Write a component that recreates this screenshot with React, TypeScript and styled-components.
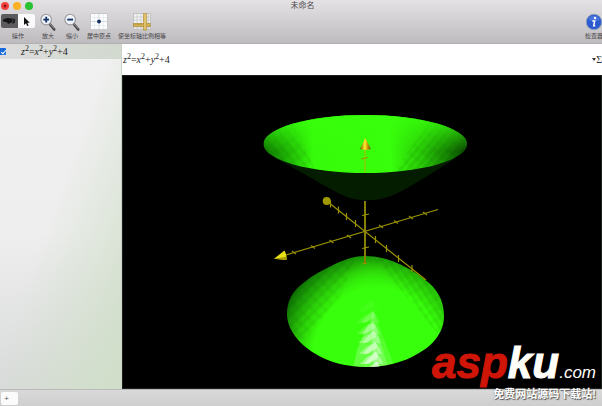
import React from "react";
import styled, { createGlobalStyle } from "styled-components";

const GlobalStyle = createGlobalStyle`
  * { box-sizing: border-box; }
  body { margin: 0; overflow: hidden; }
  button, input { font: inherit; color: inherit; }
`;

const Window = styled.div`
  position: relative;
  display: grid;
  grid-template-rows: auto 1fr auto;
  height: 100vh;
  overflow: hidden;
  background: #000;
  color: #333;
  font-family: "Liberation Sans", "Noto Sans CJK SC", sans-serif;
`;

const Header = styled.header`
  height: 44px;
  background: linear-gradient(#e3e1e3, #d3d1d4 45%, #bdbbbe);
  border-bottom: 1px solid #b2b0b5;
`;

const TitleBar = styled.div`
  display: grid;
  grid-template-columns: 1fr auto 1fr;
  align-items: center;
  height: 11px;
`;

const Lights = styled.div`
  display: flex;
  gap: 4px;
  padding-left: 1px;
`;

const Light = styled.button<{ $color: string; $edited?: boolean }>`
  width: 8px;
  height: 8px;
  padding: 0;
  border: 0;
  border-radius: 50%;
  background: ${(p) =>
    p.$edited ? `radial-gradient(circle, #8b1512 0 1px, ${p.$color} 2px)` : p.$color};
`;

const Title = styled.h1`
  margin: 0;
  padding: 0 0 0 3px;
  color: #4b494c;
  font-size: 8px;
  line-height: 10px;
  font-weight: 400;
`;

const Toolbar = styled.div`
  display: flex;
  align-items: flex-start;
  padding-top: 2px;
`;

const ToolGroup = styled.div`
  width: 36px;
  text-align: center;
`;

const Segments = styled.div`
  display: flex;
  height: 18px;
  padding: 1px;
`;

const Segment = styled.button<{ $active?: boolean }>`
  display: grid;
  place-items: center;
  width: 17px;
  height: 14px;
  padding: 0;
  border: 0;
  border-radius: ${(p) => (p.$active ? "2px 0 0 2px" : "0 2px 2px 0")};
  background: ${(p) => (p.$active ? "#5c5c5e" : "#fafafa")};
`;

const Tool = styled.button<{ $width: number; $end?: boolean }>`
  flex: none;
  width: ${(p) => p.$width}px;
  margin-left: ${(p) => (p.$end ? "auto" : "0")};
  margin-right: ${(p) => (p.$end ? "-3px" : "0")};
  padding: 0;
  border: 0;
  background: none;
  text-align: center;
  svg { display: block; margin: 0 auto; }
`;

const Caption = styled.span`
  display: block;
  margin-top: 1px;
  color: #474548;
  font-size: 6px;
  line-height: 9px;
  white-space: nowrap;
`;

const Body = styled.div`
  display: grid;
  grid-template-columns: 122px 1fr;
  min-height: 0;
`;

const Sidebar = styled.aside`
  background: linear-gradient(110deg, #dededf00 45%, #d1dfca 95%),
    linear-gradient(#f1f1f1, #eeeeee 55%, #d9dadb);
  border-right: 1px solid #cbd2c9;
`;

const Entry = styled.label`
  display: flex;
  align-items: center;
  gap: 15px;
  height: 15px;
  background: linear-gradient(90deg, #dcdcdc, #d2d9cf);
`;

const Check = styled.input`
  appearance: none;
  width: 6px;
  height: 7px;
  margin: 0;
  border-radius: 0 1px 1px 0;
  background: #1769dc;
  display: grid;
  place-items: center;
  &:checked::after {
    content: "";
    width: 2px;
    height: 4px;
    border: solid #fff;
    border-width: 0 1px 1px 0;
    transform: rotate(40deg);
  }
`;

const Formula = styled.span`
  color: #1d1d1d;
  font-family: "Liberation Serif", serif;
  font-size: 10px;
  line-height: 14px;
  white-space: nowrap;
  sup {
    font-size: 8px;
    line-height: 0;
    vertical-align: 4px;
  }
`;

const Main = styled.main`
  display: grid;
  grid-template-rows: auto 1fr;
  min-width: 0;
  min-height: 0;
`;

const FormulaBar = styled.div`
  display: flex;
  align-items: center;
  justify-content: space-between;
  height: 31px;
  padding-left: 1px;
  overflow: hidden;
  background: #fff;
`;

const SigmaButton = styled.button`
  display: flex;
  align-items: center;
  padding: 0;
  border: 0;
  background: none;
  font-family: "Liberation Serif", serif;
  font-size: 10px;
  line-height: 14px;
`;

const Plot = styled.section`
  min-height: 0;
  background: #000;
  border: 1px solid #1d211d;
  svg { display: block; width: 100%; height: 100%; }
`;

const Footer = styled.footer`
  height: 17px;
  padding: 2px 1px 1px;
  border-top: 1px solid #b9b9b9;
  background: linear-gradient(#d9d9d9, #cecece);
`;

const AddButton = styled.button`
  display: block;
  width: 17px;
  height: 13px;
  padding: 0 6px 0 0;
  border: 0;
  border-radius: 2px;
  background: #fbfbfb;
  color: #555;
  font-size: 8px;
  line-height: 13px;
`;

const Watermark = styled.div`
  position: absolute;
  right: 6px;
  bottom: 5px;
  text-align: right;
  pointer-events: none;
`;

const Brand = styled.div`
  color: #fffef9;
  font-size: 44px;
  line-height: 40px;
  font-style: italic;
  font-weight: 700;
  white-space: nowrap;
  b { color: #cf1508; -webkit-text-stroke: 1px #cf1508; }
  span { -webkit-text-stroke: 1px #fffef9; }
  small { font-size: 17px; font-weight: 400; }
`;

const Slogan = styled.div`
  position: relative;
  margin-top: -6px;
  color: #fff;
  font-size: 11px;
  line-height: 14px;
  font-weight: 700;
  text-shadow: 1px 1px 1px #555, 0 0 1px #777;
`;

const Equation = () => (
  <Formula>
    <i>z</i><sup>2</sup>=<i>x</i><sup>2</sup>+<i>y</i><sup>2</sup>+4
  </Formula>
);

const Magnifier = ({ plus }: { plus?: boolean }) => (
  <svg width="18" height="18" viewBox="0 0 18 18">
    <path d="M10.7 11 15.2 16.4" stroke="#444" strokeWidth="2.6" strokeLinecap="round" />
    <path d="m10.5 10.4 4.8 5.3" stroke="#aaa" strokeWidth=".8" />
    <circle cx="7.2" cy="6.6" r="5.3" fill="#eef2f8" stroke="#98989b" strokeWidth="1.1" />
    <path d={plus ? "M4.3 6.6h5.8M7.2 3.7v5.8" : "M4.3 6.6h5.8"} stroke="#16366b" strokeWidth="1.9" />
  </svg>
);

const OriginIcon = () => (
  <svg width="18" height="18" viewBox="0 0 18 18">
    <rect x=".5" y=".5" width="17" height="16" rx=".5" fill="#fbfcfd" stroke="#c8c8ca" />
    <path d="M4.5 1v15M13.5 1v15M1 4.5h16M1 12.5h16" stroke="#e5e9ed" strokeWidth=".6" />
    <path d="M9 1v15M1 8.5h16" stroke="#bcc5cf" strokeWidth=".6" />
    <circle cx="9" cy="8.5" r="1.9" fill="#132f5f" />
  </svg>
);

const RulerIcon = () => (
  <svg width="18" height="18" viewBox="0 0 18 18">
    <rect x=".5" y=".5" width="17" height="16" fill="#efeff0" stroke="#c3c3c3" />
    <path d="M4 1v15M8 1v15M15.5 1v15M1 4h16M1 7h16M1 15h16" stroke="#bfc3c7" strokeWidth=".6" />
    <path d="M.3 10.5h17v3H.3z" fill="#d9b653" stroke="#9c7b25" strokeWidth=".6" />
    <path d="M10.5.3h3.2v16.8h-3.2z" fill="#e1c169" stroke="#a58632" strokeWidth=".6" />
    <path d="M2 11v1m2-1v1m2-1v1m2-1v1" stroke="#79591a" strokeWidth=".5" />
  </svg>
);

const InfoIcon = () => (
  <svg width="18" height="18" viewBox="0 0 18 18">
    <circle cx="9" cy="9" r="7.7" fill="#2b59ce" stroke="#8d9fbd" />
    <path d="M3.3 7a6 6 0 0 1 11.4 0Q9 9.5 3.3 7" fill="#4875dc" />
    <circle cx="10" cy="5" r="1.2" fill="#fff" />
    <path d="M7.3 7.9h2.4l-1 4.8h1.5" fill="none" stroke="#fff" strokeWidth="1.5" />
  </svg>
);

const lowerSurface =
  "M365 256C377 256 388 259 397 263C408 268 416 272 424 279C437 288 444 300 444 316C444 333 432 346 419 353C403 363 384 367 366 367C347 367 328 362 314 353C299 344 287 329 287 314C287 301 292 292 302 284C314 274 325 269 337 263C347 259 354 256 365 256Z";

const xTicks = [[294, 252.5], [313, 247], [331.5, 241.5], [349, 236.5], [381, 226.5], [396, 222], [411, 217.5], [425, 213.5]];
const yTicks = [[330.5, 204], [338.5, 210], [346.5, 216.5], [355.5, 223.5], [375.5, 239.5], [386.5, 248.5], [398.5, 258.5], [412, 268.5]];

const glints = [
  { x: 372, y: 300, strength: 0.06 },
  { x: 373, y: 311, strength: 0.26 },
  { x: 373, y: 322, strength: 0.4 },
  { x: 374, y: 331, strength: 0.56 },
  { x: 375, y: 342, strength: 0.72 },
  { x: 376, y: 352, strength: 0.86 },
  { x: 377, y: 362, strength: 0.92 },
];

const SurfacePlot = () => (
  <svg viewBox="123 76 478 312" role="img" aria-label="z²=x²+y²+4">
    <defs>
      <linearGradient id="bowl" gradientUnits="userSpaceOnUse" x1="264" y1="150" x2="467" y2="142">
        <stop offset="0" stopColor="#0f7800" />
        <stop offset=".1" stopColor="#1dae04" />
        <stop offset=".24" stopColor="#36fb0a" />
        <stop offset=".62" stopColor="#38ff0b" />
        <stop offset=".77" stopColor="#29cd06" />
        <stop offset=".9" stopColor="#168502" />
        <stop offset="1" stopColor="#084400" />
      </linearGradient>
      <linearGradient id="bowlLight" gradientUnits="userSpaceOnUse" x1="365" y1="113" x2="365" y2="172">
        <stop offset="0" stopColor="#38ff0b" />
        <stop offset=".3" stopColor="#38ff0b" stopOpacity=".55" />
        <stop offset=".65" stopColor="#38ff0b" stopOpacity="0" />
      </linearGradient>
      <radialGradient id="dome" gradientUnits="userSpaceOnUse" cx="378" cy="358" r="113" gradientTransform="translate(378 358) scale(.93 1) translate(-378 -358)">
        <stop offset="0" stopColor="#38ff0b" />
        <stop offset=".62" stopColor="#38ff0b" />
        <stop offset=".78" stopColor="#2acb08" />
        <stop offset=".93" stopColor="#168c05" />
        <stop offset="1" stopColor="#0d6602" />
      </radialGradient>
      <radialGradient id="domeCenter">
        <stop offset=".3" stopColor="#38ff0b" stopOpacity=".9" />
        <stop offset="1" stopColor="#38ff0b" stopOpacity="0" />
      </radialGradient>
      <linearGradient id="gold"><stop stopColor="#685a00" /><stop offset=".45" stopColor="#fff02c" /><stop offset=".65" stopColor="#d9a50b" /><stop offset="1" stopColor="#704000" /></linearGradient>
      <pattern id="facetsLeft" width="9" height="7" patternUnits="userSpaceOnUse" patternTransform="rotate(-45)">
        <path d="M0 0h9v3H0z" fill="#003000" opacity=".06" />
        <path d="M0 0h4v7H0z" fill="#003000" opacity=".04" />
      </pattern>
      <pattern id="facetsBowlLeft" width="9" height="7" patternUnits="userSpaceOnUse" patternTransform="rotate(52)">
        <path d="M0 0h9v3H0z" fill="#003000" opacity=".06" />
        <path d="M0 0h4v7H0z" fill="#003000" opacity=".04" />
      </pattern>
      <pattern id="facetsRight" width="9" height="6" patternUnits="userSpaceOnUse" patternTransform="rotate(-50)">
        <path d="M0 0h9v3H0z" fill="#003000" opacity=".08" />
        <path d="M0 0h4v6H0z" fill="#003000" opacity=".03" />
      </pattern>
      <pattern id="facetsDown" width="9" height="6" patternUnits="userSpaceOnUse" patternTransform="rotate(57)">
        <path d="M0 0h9v3H0z" fill="#003000" opacity=".06" />
        <path d="M0 0h4v6H0z" fill="#003000" opacity=".03" />
      </pattern>
      <clipPath id="domeClip"><path d={lowerSurface} /></clipPath>
      <clipPath id="bowlClip"><ellipse cx="365.3" cy="144" rx="101.8" ry="29" /></clipPath>
    </defs>

    <path d="M276 158C290 166 301 172 313 179C327 187 337 193 347 197Q364 203 385 198C399 194 412 185 426 177L456 158Z" fill="#041c00" />
    <ellipse cx="365.3" cy="144" rx="101.8" ry="29" fill="url(#bowl)" />
    <g clipPath="url(#bowlClip)">
      <path d="M260 120h30l31 60h-61z" fill="url(#facetsBowlLeft)" />
      <path d="M436 113h33v67h-81z" fill="url(#facetsRight)" />
      <path d="M264 112h203v61H264z" fill="url(#bowlLight)" />
    </g>

    <path d={lowerSurface} fill="url(#dome)" />
    <g clipPath="url(#domeClip)">
      <path d="M280 250h78l-17 45-32 40-22 16z" fill="url(#facetsLeft)" />
      <path d="M369 253h77v90z" fill="url(#facetsDown)" />
      <ellipse cx="370" cy="316" rx="45" ry="55" fill="url(#domeCenter)" />
      <path d="M373 311 395 368H382L370 322Z" fill="#e7ffe0" opacity=".16" />
      <path d="M375 324 388 368H353L357 350 368 324Z" fill="#e7ffe0" opacity=".24" />
      {glints.map(({ x, y, strength }) => (
        <g key={y} fill="#efffe9">
          <path d={`M${x} ${y}l-9 5-7 7 9 0 8-5 2-3Z`} opacity={strength * 0.5} />
          <path d={`M${x} ${y}l3 5-4 2-5 4-6 1 5-6Z`} opacity={strength * 0.75} />
          <path d={`M${x - 1} ${y + 6}l5-1 3 7-10 0Z`} opacity={strength * 0.55} />
        </g>
      ))}
    </g>

    <g fill="none" stroke="#9b9300" strokeWidth="1.2">
      <path d="M365 149V172" stroke="#a0c000" />
      <path d="M365 201V263" strokeWidth="2" stroke="#858000" />
      <path d="M284 255.5 438 209.5M328 202 426 280" />
      <path d="m361 159 7-1.5M362 215.5l7-1.5M362 248.5l7-1.5M362 264l5-1" />
      {xTicks.map(([x, y]) => <path key={x} d={`M${x - 2} ${y - 1.5}l4 3`} />)}
      {yTicks.map(([x, y]) => <path key={x} d={`M${x} ${y - 3.5}v7`} />)}
    </g>
    <circle cx="326.7" cy="201" r="4" fill="#a09a00" />
    <path d="M365.3 138 360 149Q365 151 370.8 149Z" fill="url(#gold)" />
    <path d="M274 258.8 284.5 250.5Q287 255 286.5 260Z" fill="#e8df16" />
    <path d="m274 258.8 12.4-2v3.2Z" fill="#a79b08" />
  </svg>
);

export default function App() {
  return (
    <Window>
      <GlobalStyle />
      <Header>
        <TitleBar>
          <Lights>
            <Light $color="#f5433f" $edited aria-label="Close" />
            <Light $color="#fbb124" aria-label="Minimize" />
            <Light $color="#29c232" aria-label="Zoom" />
          </Lights>
          <Title>未命名</Title>
        </TitleBar>
        <Toolbar>
          <ToolGroup>
            <Segments>
              <Segment $active aria-label="Rotate">
                <svg width="15" height="10" viewBox="0 0 15 10">
                  <path d="M1 3.5 5 2l6 .4 2.2 1.1-.4 3L11 7.8 9.5 6.4 6 8 5 6.2 1 5.5Z" fill="#171719" />
                  <path d="M10 3.2q2 1 .4 3.3" fill="none" stroke="#707074" strokeWidth=".7" />
                </svg>
              </Segment>
              <Segment aria-label="Select">
                <svg width="9" height="11" viewBox="0 0 9 11">
                  <path d="M2 1v8l2-1.8L5.2 10l1.4-.6-1.2-2.7h2.4Z" fill="#111" />
                </svg>
              </Segment>
            </Segments>
            <Caption>操作</Caption>
          </ToolGroup>
          <Tool $width={24}><Magnifier plus /><Caption>放大</Caption></Tool>
          <Tool $width={24}><Magnifier /><Caption>缩小</Caption></Tool>
          <Tool $width={30}><OriginIcon /><Caption>居中原点</Caption></Tool>
          <Tool $width={56}><RulerIcon /><Caption>使坐标轴比例相等</Caption></Tool>
          <Tool $width={22} $end><InfoIcon /><Caption>检查器</Caption></Tool>
        </Toolbar>
      </Header>
      <Body>
        <Sidebar>
          <Entry><Check type="checkbox" defaultChecked /><Equation /></Entry>
        </Sidebar>
        <Main>
          <FormulaBar>
            <Equation />
            <SigmaButton aria-label="Symbols">
              <svg width="4" height="3" viewBox="0 0 4 3"><path d="M0 0h4L2 3Z" fill="#333" /></svg>Σ
            </SigmaButton>
          </FormulaBar>
          <Plot><SurfacePlot /></Plot>
        </Main>
      </Body>
      <Footer><AddButton aria-label="Add">+</AddButton></Footer>
      <Watermark>
        <Brand><b>asp</b><span>ku</span><small>.com</small></Brand>
        <Slogan>免费网站源码下载站!</Slogan>
      </Watermark>
    </Window>
  );
}
